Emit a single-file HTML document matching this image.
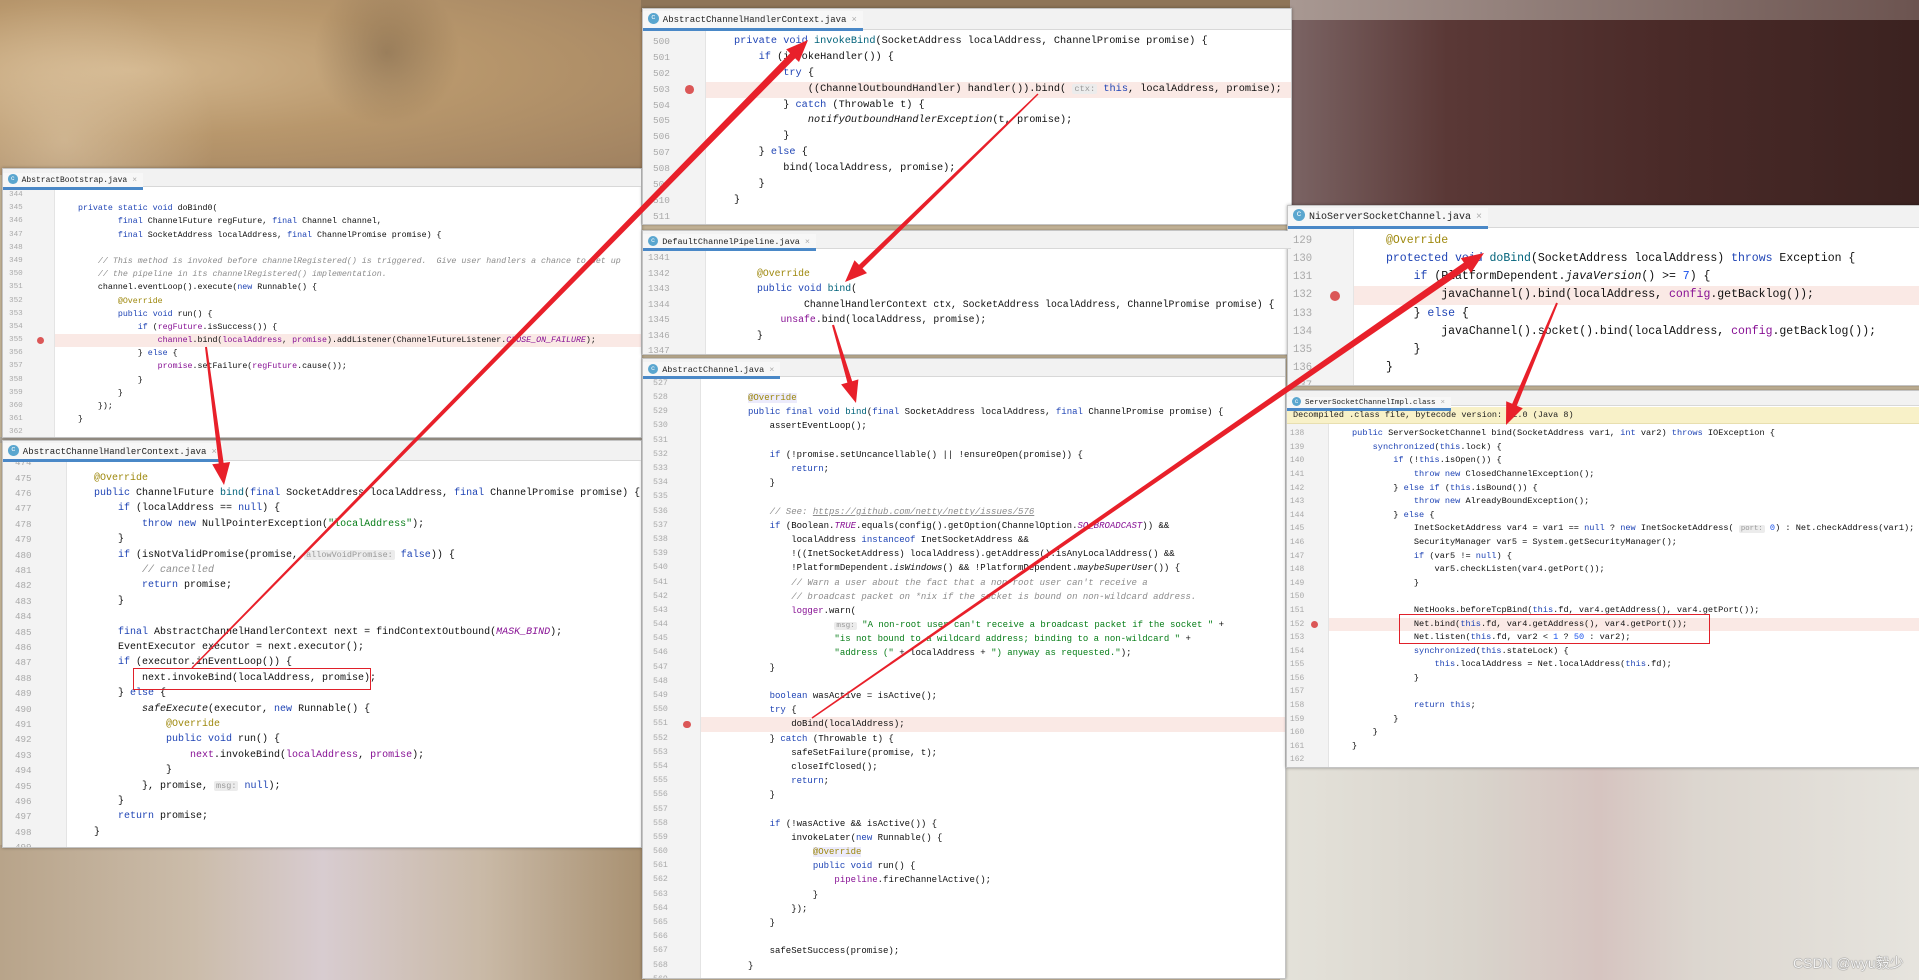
<!DOCTYPE html>
<html><head><meta charset="utf-8">
<style>
*{margin:0;padding:0;box-sizing:border-box}
html,body{width:1919px;height:980px;overflow:hidden;position:relative;background:#c8b89a;font-family:"Liberation Mono",monospace}
.bg{position:absolute}
.p{position:absolute;background:#fff;overflow:hidden;border:1px solid #c4c4c4;box-shadow:0 0 3px rgba(0,0,0,.35);color:#101010}
.gut{position:absolute;left:0;top:0;bottom:0;width:var(--g);background:#f3f3f3;border-right:1px solid #e4e4e4}
.tb{position:absolute;left:0;top:0;right:0;height:var(--tb);background:#f2f2f2;border-bottom:1px solid #d8d8d8;z-index:3;white-space:nowrap}
.tab{display:inline-block;height:100%;padding:0 6px 0 5px;border-bottom:3px solid #4a88c7;background:#f7f7f7;font-size:var(--tf);color:#222;line-height:calc(var(--tb) - 2px)}
.tab i{display:inline-block;width:calc(var(--tf)*1.2);height:calc(var(--tf)*1.2);border-radius:50%;background:#5aa6cf;color:#fff;font-style:normal;font-size:calc(var(--tf)*.8);text-align:center;line-height:calc(var(--tf)*1.2);vertical-align:middle;margin-right:4px;position:relative;top:-1px}
.tab em{font-style:normal;color:#aaa;margin-left:5px}
.rows{position:absolute;left:0;right:0;top:var(--rt)}
.rows>div{position:relative;height:var(--lh);line-height:var(--lh);padding-left:var(--cx);white-space:pre;font-size:var(--fs)}
.rows>div>b{position:absolute;left:var(--nx);top:0;font-weight:normal;color:#a9a9a9;font-size:calc(var(--fs)*.92)}
.rows>div.hl{background:linear-gradient(to right,transparent var(--g),#fae9e5 var(--g))}
.bp{position:absolute;top:50%;width:calc(var(--lh)*.55);height:calc(var(--lh)*.55);margin-top:calc(var(--lh)*-.275);border-radius:50%;background:#db5757}
.k{color:#1f44b5}.a{color:#9e880d}.f{color:#871094}.s{color:#067d17}.c{color:#8c8c8c;font-style:italic}.it{font-style:italic}.n{color:#1750eb}
.h{background:#ececec;color:#999;font-size:.85em;padding:0 2px;border-radius:2px}
.ab{background:#ecebfb}
.box{position:absolute;border:1.5px solid #e0202a;z-index:4}
.ban{position:absolute;left:0;right:0;background:#f8f1c8;border-bottom:1px solid #e8dfb0;font-size:8.5px;color:#222;padding-left:6px;z-index:2}
</style></head><body>
<!-- backgrounds -->
<div class="bg" style="left:0;top:0;width:645px;height:175px;background:radial-gradient(ellipse at 20% 40%,#d2b58c 0%,#b8976c 45%,#9e8060 100%)"></div>
<div class="bg" style="left:0;top:0;width:645px;height:175px;background:radial-gradient(circle at 60% 30%,rgba(90,70,50,.35) 0,transparent 18%),radial-gradient(circle at 10% 80%,rgba(230,210,180,.5) 0,transparent 25%)"></div>
<div class="bg" style="left:641px;top:0;width:660px;height:12px;background:#8e7558"></div>
<div class="bg" style="left:1290px;top:0;width:629px;height:210px;background:linear-gradient(to right,#7b6464 0%,#5a3836 25%,#4a2a28 60%,#3b2220 100%)"></div>
<div class="bg" style="left:1290px;top:0;width:629px;height:20px;background:linear-gradient(to right,#a89892,#6c5450)"></div>
<div class="bg" style="left:0;top:437px;width:645px;height:6px;background:#b0a89c"></div>
<div class="bg" style="left:0;top:845px;width:645px;height:135px;background:linear-gradient(to right,#b8a48a 0%,#cbbcaa 30%,#d8ccd0 50%,#c9b9a6 75%,#a89070 100%)"></div>
<div class="bg" style="left:1280px;top:760px;width:639px;height:220px;background:linear-gradient(to right,#e4e2da 0%,#d9d4cc 30%,#d6c4c0 50%,#dcd6cf 65%,#e6e4de 100%)"></div>

<!-- P1 AbstractBootstrap -->
<div class="p" style="left:2px;top:168px;width:640px;height:270px;--g:52px;--tb:18px;--tf:8px;--rt:20px;--lh:13.2px;--fs:8.3px;--cx:75px;--nx:6px">
<div class="gut"></div>
<div class="tb"><span class="tab"><i>c</i>AbstractBootstrap.java<em>×</em></span></div>
<div class="rows">
<div><b>344</b></div>
<div><b>345</b><span class="k">private static void</span> doBind0(</div>
<div><b>346</b>        <span class="k">final</span> ChannelFuture regFuture, <span class="k">final</span> Channel channel,</div>
<div><b>347</b>        <span class="k">final</span> SocketAddress localAddress, <span class="k">final</span> ChannelPromise promise) {</div>
<div><b>348</b></div>
<div><b>349</b>    <span class="c">// This method is invoked before channelRegistered() is triggered.  Give user handlers a chance to set up</span></div>
<div><b>350</b>    <span class="c">// the pipeline in its channelRegistered() implementation.</span></div>
<div><b>351</b>    channel.eventLoop().execute(<span class="k">new</span> Runnable() {</div>
<div><b>352</b>        <span class="a">@Override</span></div>
<div><b>353</b>        <span class="k">public void</span> run() {</div>
<div><b>354</b>            <span class="k">if</span> (<span class="f">regFuture</span>.isSuccess()) {</div>
<div class="hl"><b>355</b><u class="bp" style="left:34px"></u>                <span class="f">channel</span>.bind(<span class="f">localAddress</span>, <span class="f">promise</span>).addListener(ChannelFutureListener.<span class="f it">CLOSE_ON_FAILURE</span>);</div>
<div><b>356</b>            } <span class="k">else</span> {</div>
<div><b>357</b>                <span class="f">promise</span>.setFailure(<span class="f">regFuture</span>.cause());</div>
<div><b>358</b>            }</div>
<div><b>359</b>        }</div>
<div><b>360</b>    });</div>
<div><b>361</b>}</div>
<div><b>362</b></div>
</div></div>

<!-- P2 AbstractChannelHandlerContext bottom -->
<div class="p" style="left:2px;top:440px;width:640px;height:408px;--g:64px;--tb:20px;--tf:9px;--rt:14.3px;--lh:15.4px;--fs:10px;--cx:91px;--nx:12px">
<div class="gut"></div>
<div class="tb"><span class="tab"><i>c</i>AbstractChannelHandlerContext.java<em>×</em></span></div>
<div class="rows">
<div><b>474</b></div>
<div><b>475</b><span class="a">@Override</span></div>
<div><b>476</b><span class="k">public</span> ChannelFuture <span style="color:#00627a">bind</span>(<span class="k">final</span> SocketAddress localAddress, <span class="k">final</span> ChannelPromise promise) {</div>
<div><b>477</b>    <span class="k">if</span> (localAddress == <span class="k">null</span>) {</div>
<div><b>478</b>        <span class="k">throw new</span> NullPointerException(<span class="s">"localAddress"</span>);</div>
<div><b>479</b>    }</div>
<div><b>480</b>    <span class="k">if</span> (isNotValidPromise(promise, <span class="h">allowVoidPromise:</span> <span class="k">false</span>)) {</div>
<div><b>481</b>        <span class="c">// cancelled</span></div>
<div><b>482</b>        <span class="k">return</span> promise;</div>
<div><b>483</b>    }</div>
<div><b>484</b></div>
<div><b>485</b>    <span class="k">final</span> AbstractChannelHandlerContext next = findContextOutbound(<span class="f it">MASK_BIND</span>);</div>
<div><b>486</b>    EventExecutor executor = next.executor();</div>
<div><b>487</b>    <span class="k">if</span> (executor.inEventLoop()) {</div>
<div><b>488</b>        next.invokeBind(localAddress, promise);</div>
<div><b>489</b>    } <span class="k">else</span> {</div>
<div><b>490</b>        <span class="it">safeExecute</span>(executor, <span class="k">new</span> Runnable() {</div>
<div><b>491</b>            <span class="a">@Override</span></div>
<div><b>492</b>            <span class="k">public void</span> run() {</div>
<div><b>493</b>                <span class="f">next</span>.invokeBind(<span class="f">localAddress</span>, <span class="f">promise</span>);</div>
<div><b>494</b>            }</div>
<div><b>495</b>        }, promise, <span class="h">msg:</span> <span class="k">null</span>);</div>
<div><b>496</b>    }</div>
<div><b>497</b>    <span class="k">return</span> promise;</div>
<div><b>498</b>}</div>
<div><b>499</b></div>
</div></div>
<div class="box" style="left:133px;top:668px;width:238px;height:22px"></div>

<!-- P3 top AbstractChannelHandlerContext -->
<div class="p" style="left:642px;top:8px;width:650px;height:217px;--g:63px;--tb:21px;--tf:9px;--rt:25px;--lh:15.9px;--fs:10.25px;--cx:91px;--nx:10px">
<div class="gut"></div>
<div class="tb"><span class="tab"><i>c</i>AbstractChannelHandlerContext.java<em>×</em></span></div>
<div class="rows">
<div><b>500</b><span class="k">private void</span> <span style="color:#00627a">invokeBind</span>(SocketAddress localAddress, ChannelPromise promise) {</div>
<div><b>501</b>    <span class="k">if</span> (invokeHandler()) {</div>
<div><b>502</b>        <span class="k">try</span> {</div>
<div class="hl"><b>503</b><u class="bp" style="left:42px"></u>            ((ChannelOutboundHandler) handler()).bind( <span class="h">ctx:</span> <span class="k">this</span>, localAddress, promise);</div>
<div><b>504</b>        } <span class="k">catch</span> (Throwable t) {</div>
<div><b>505</b>            <span class="it">notifyOutboundHandlerException</span>(t, promise);</div>
<div><b>506</b>        }</div>
<div><b>507</b>    } <span class="k">else</span> {</div>
<div><b>508</b>        bind(localAddress, promise);</div>
<div><b>509</b>    }</div>
<div><b>510</b>}</div>
<div><b>511</b></div>
</div></div>

<!-- P4 DefaultChannelPipeline -->
<div class="p" style="left:642px;top:230px;width:650px;height:125px;--g:63px;--tb:18px;--tf:8.5px;--rt:19.3px;--lh:15.5px;--fs:9.8px;--cx:114px;--nx:5px">
<div class="gut"></div>
<div class="tb"><span class="tab"><i>c</i>DefaultChannelPipeline.java<em>×</em></span></div>
<div class="rows">
<div><b>1341</b></div>
<div><b>1342</b><span class="a">@Override</span></div>
<div><b>1343</b><span class="k">public void</span> <span style="color:#00627a">bind</span>(</div>
<div><b>1344</b>        ChannelHandlerContext ctx, SocketAddress localAddress, ChannelPromise promise) {</div>
<div><b>1345</b>    <span class="f">unsafe</span>.bind(localAddress, promise);</div>
<div><b>1346</b>}</div>
<div><b>1347</b></div>
</div></div>

<!-- P5 AbstractChannel -->
<div class="p" style="left:642px;top:358px;width:644px;height:621px;--g:58px;--tb:18px;--tf:8.5px;--rt:17.9px;--lh:14.2px;--fs:9px;--cx:105px;--nx:10px">
<div class="gut"></div>
<div class="tb"><span class="tab"><i>c</i>AbstractChannel.java<em>×</em></span></div>
<div class="rows">
<div><b>527</b></div>
<div><b>528</b><span class="a ab">@Override</span></div>
<div><b>529</b><span class="k">public final void</span> <span style="color:#00627a">bind</span>(<span class="k">final</span> SocketAddress localAddress, <span class="k">final</span> ChannelPromise promise) {</div>
<div><b>530</b>    assertEventLoop();</div>
<div><b>531</b></div>
<div><b>532</b>    <span class="k">if</span> (!promise.setUncancellable() || !ensureOpen(promise)) {</div>
<div><b>533</b>        <span class="k">return</span>;</div>
<div><b>534</b>    }</div>
<div><b>535</b></div>
<div><b>536</b>    <span class="c">// See: <u>https://github.com/netty/netty/issues/576</u></span></div>
<div><b>537</b>    <span class="k">if</span> (Boolean.<span class="f it">TRUE</span>.equals(config().getOption(ChannelOption.<span class="f it">SO_BROADCAST</span>)) &amp;&amp;</div>
<div><b>538</b>        localAddress <span class="k">instanceof</span> InetSocketAddress &amp;&amp;</div>
<div><b>539</b>        !((InetSocketAddress) localAddress).getAddress().isAnyLocalAddress() &amp;&amp;</div>
<div><b>540</b>        !PlatformDependent.<span class="it">isWindows</span>() &amp;&amp; !PlatformDependent.<span class="it">maybeSuperUser</span>()) {</div>
<div><b>541</b>        <span class="c">// Warn a user about the fact that a non-root user can't receive a</span></div>
<div><b>542</b>        <span class="c">// broadcast packet on *nix if the socket is bound on non-wildcard address.</span></div>
<div><b>543</b>        <span class="f">logger</span>.warn(</div>
<div><b>544</b>                <span class="h">msg:</span> <span class="s">"A non-root user can't receive a broadcast packet if the socket "</span> +</div>
<div><b>545</b>                <span class="s">"is not bound to a wildcard address; binding to a non-wildcard "</span> +</div>
<div><b>546</b>                <span class="s">"address ("</span> + localAddress + <span class="s">") anyway as requested."</span>);</div>
<div><b>547</b>    }</div>
<div><b>548</b></div>
<div><b>549</b>    <span class="k">boolean</span> wasActive = isActive();</div>
<div><b>550</b>    <span class="k">try</span> {</div>
<div class="hl"><b>551</b><u class="bp" style="left:40px"></u>        doBind(localAddress);</div>
<div><b>552</b>    } <span class="k">catch</span> (Throwable t) {</div>
<div><b>553</b>        safeSetFailure(promise, t);</div>
<div><b>554</b>        closeIfClosed();</div>
<div><b>555</b>        <span class="k">return</span>;</div>
<div><b>556</b>    }</div>
<div><b>557</b></div>
<div><b>558</b>    <span class="k">if</span> (!wasActive &amp;&amp; isActive()) {</div>
<div><b>559</b>        invokeLater(<span class="k">new</span> Runnable() {</div>
<div><b>560</b>            <span class="a ab">@Override</span></div>
<div><b>561</b>            <span class="k">public void</span> run() {</div>
<div><b>562</b>                <span class="f">pipeline</span>.fireChannelActive();</div>
<div><b>563</b>            }</div>
<div><b>564</b>        });</div>
<div><b>565</b>    }</div>
<div><b>566</b></div>
<div><b>567</b>    safeSetSuccess(promise);</div>
<div><b>568</b>}</div>
<div><b>569</b></div>
</div></div>

<!-- P6 NioServerSocketChannel -->
<div class="p" style="left:1287px;top:205px;width:634px;height:181px;--g:66px;--tb:22px;--tf:10px;--rt:25.9px;--lh:18.2px;--fs:11.5px;--cx:98px;--nx:5px">
<div class="gut"></div>
<div class="tb"><span class="tab"><i>c</i>NioServerSocketChannel.java<em>×</em></span></div>
<div class="rows">
<div><b>129</b><span class="a">@Override</span></div>
<div><b>130</b><span class="k">protected void</span> <span style="color:#00627a">doBind</span>(SocketAddress localAddress) <span class="k">throws</span> Exception {</div>
<div><b>131</b>    <span class="k">if</span> (PlatformDependent.<span class="it">javaVersion</span>() &gt;= <span class="n">7</span>) {</div>
<div class="hl"><b>132</b><u class="bp" style="left:42px"></u>        javaChannel().bind(localAddress, <span class="f">config</span>.getBacklog());</div>
<div><b>133</b>    } <span class="k">else</span> {</div>
<div><b>134</b>        javaChannel().socket().bind(localAddress, <span class="f">config</span>.getBacklog());</div>
<div><b>135</b>    }</div>
<div><b>136</b>}</div>
<div><b>137</b></div>
</div></div>

<!-- P7 ServerSocketChannelImpl -->
<div class="p" style="left:1286px;top:390px;width:635px;height:378px;--g:42px;--tb:15px;--tf:7.5px;--rt:36.2px;--lh:13.6px;--fs:8.6px;--cx:65px;--nx:3px">
<div class="gut"></div>
<div class="tb"><span class="tab"><i>c</i>ServerSocketChannelImpl.class<em>×</em></span></div>
<div class="ban" style="top:16px;height:17px;line-height:17px">Decompiled .class file, bytecode version: 52.0 (Java 8)</div>
<div class="rows">
<div><b>138</b><span class="k">public</span> ServerSocketChannel bind(SocketAddress var1, <span class="k">int</span> var2) <span class="k">throws</span> IOException {</div>
<div><b>139</b>    <span class="k">synchronized</span>(<span class="k">this</span>.lock) {</div>
<div><b>140</b>        <span class="k">if</span> (!<span class="k">this</span>.isOpen()) {</div>
<div><b>141</b>            <span class="k">throw new</span> ClosedChannelException();</div>
<div><b>142</b>        } <span class="k">else if</span> (<span class="k">this</span>.isBound()) {</div>
<div><b>143</b>            <span class="k">throw new</span> AlreadyBoundException();</div>
<div><b>144</b>        } <span class="k">else</span> {</div>
<div><b>145</b>            InetSocketAddress var4 = var1 == <span class="k">null</span> ? <span class="k">new</span> InetSocketAddress( <span class="h">port:</span> <span class="n">0</span>) : Net.checkAddress(var1);</div>
<div><b>146</b>            SecurityManager var5 = System.getSecurityManager();</div>
<div><b>147</b>            <span class="k">if</span> (var5 != <span class="k">null</span>) {</div>
<div><b>148</b>                var5.checkListen(var4.getPort());</div>
<div><b>149</b>            }</div>
<div><b>150</b></div>
<div><b>151</b>            NetHooks.beforeTcpBind(<span class="k">this</span>.fd, var4.getAddress(), var4.getPort());</div>
<div class="hl"><b>152</b><u class="bp" style="left:24px"></u>            Net.bind(<span class="k">this</span>.fd, var4.getAddress(), var4.getPort());</div>
<div><b>153</b>            Net.listen(<span class="k">this</span>.fd, var2 &lt; <span class="n">1</span> ? <span class="n">50</span> : var2);</div>
<div><b>154</b>            <span class="k">synchronized</span>(<span class="k">this</span>.stateLock) {</div>
<div><b>155</b>                <span class="k">this</span>.localAddress = Net.localAddress(<span class="k">this</span>.fd);</div>
<div><b>156</b>            }</div>
<div><b>157</b></div>
<div><b>158</b>            <span class="k">return this</span>;</div>
<div><b>159</b>        }</div>
<div><b>160</b>    }</div>
<div><b>161</b>}</div>
<div><b>162</b></div>
</div></div>
<div class="box" style="left:1399px;top:614px;width:311px;height:30px"></div>

<div style="position:absolute;left:1793px;top:953px;font-family:'Liberation Sans','Noto Sans CJK SC',sans-serif;font-size:14px;color:#f4f4f4;text-shadow:0 0 1px #777,0 0 1px #777">CSDN @wyu毅少</div>

<svg id="arr" width="1919" height="980" style="position:absolute;left:0;top:0;z-index:10" xmlns="http://www.w3.org/2000/svg"></svg>
<script>
var A=[[192,668,808,40,1.5,7],[1038,94,845,282,1.5,5],[833,325,856,403,2,5],[812,718,1484,253,1.5,7],[206,347,224,485,2,5],[1557,303,1506,425,2,5]];
var s='';
A.forEach(function(a){
 var x1=a[0],y1=a[1],x2=a[2],y2=a[3],w1=a[4]/2,w2=a[5]/2;
 var dx=x2-x1,dy=y2-y1,L=Math.sqrt(dx*dx+dy*dy),ux=dx/L,uy=dy/L,nx=-uy,ny=ux;
 var hl=22,hw=9,bx=x2-ux*hl,by=y2-uy*hl;
 function p(x,y){return x.toFixed(1)+','+y.toFixed(1)}
 s+='<polygon fill="#e8202a" points="'+p(x1+nx*w1,y1+ny*w1)+' '+p(bx+nx*w2,by+ny*w2)+' '+p(bx+nx*hw,by+ny*hw)+' '+p(x2,y2)+' '+p(bx-nx*hw,by-ny*hw)+' '+p(bx-nx*w2,by-ny*w2)+' '+p(x1-nx*w1,y1-ny*w1)+'"/>';
});
document.getElementById('arr').innerHTML=s;
</script>
</body></html>
